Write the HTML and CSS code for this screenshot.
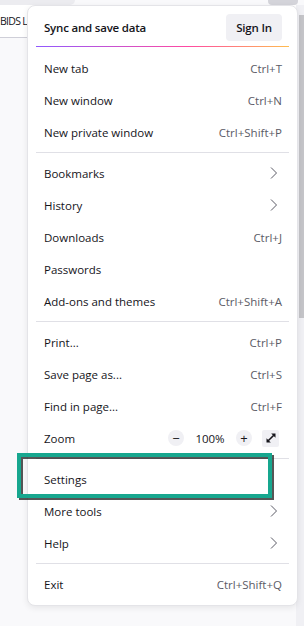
FILE: index.html
```html
<!DOCTYPE html>
<html lang="en">
<head>
  <meta charset="UTF-8" />
  <title>App menu</title>
  <link rel="stylesheet" href="styles.css">
</head>
<body>
  <div class="window">
    <div class="tabs">
      <span class="tab"></span>
      <span class="tab-btn"></span>
    </div>
    <div class="content">
      <div class="page">
        <div class="bookmarks"><span class="bm-label">BIDS L</span></div>
      </div>
      <div class="scrollbar"><div class="thumb"></div></div>
    </div>

    <!-- app menu popup -->
    <div class="menu">
      <div class="menu-header">
        <span>Sync and save data</span>
        <button class="btn-signin">Sign In</button>
      </div>
      <div class="sep-gradient"></div>

      <div class="item"><span>New tab</span><span class="key">Ctrl+T</span></div>
      <div class="item"><span>New window</span><span class="key">Ctrl+N</span></div>
      <div class="item"><span>New private window</span><span class="key">Ctrl+Shift+P</span></div>
      <div class="sep"></div>

      <div class="item"><span>Bookmarks</span><svg class="chev" width="16" height="16" viewBox="0 0 16 16"><path d="M5 2.5L10.5 8L5 13.5"/></svg></div>
      <div class="item"><span>History</span><svg class="chev" width="16" height="16" viewBox="0 0 16 16"><path d="M5 2.5L10.5 8L5 13.5"/></svg></div>
      <div class="item"><span>Downloads</span><span class="key">Ctrl+J</span></div>
      <div class="item"><span>Passwords</span></div>
      <div class="item"><span>Add-ons and themes</span><span class="key">Ctrl+Shift+A</span></div>
      <div class="sep"></div>

      <div class="item"><span>Print...</span><span class="key">Ctrl+P</span></div>
      <div class="item"><span>Save page as...</span><span class="key">Ctrl+S</span></div>
      <div class="item"><span>Find in page...</span><span class="key">Ctrl+F</span></div>
      <div class="item zoom">
        <span>Zoom</span>
        <div class="zoom-controls">
          <span class="round">&minus;</span>
          <span class="zoom-value">100%</span>
          <span class="round">+</span>
          <span class="fullscreen">
            <svg width="12" height="12" viewBox="0 0 12 12">
              <path d="M3.2 8.8L8.8 3.2" stroke="#15141a" stroke-width="1.6"/>
              <path d="M6.2 1.5H10.5V5.8Z" fill="#15141a"/>
              <path d="M1.5 6.2V10.5H5.8Z" fill="#15141a"/>
            </svg>
          </span>
        </div>
      </div>
      <div class="sep"></div>

      <div class="item settings"><span>Settings</span><div class="highlight"></div></div>
      <div class="item"><span>More tools</span><svg class="chev" width="16" height="16" viewBox="0 0 16 16"><path d="M5 2.5L10.5 8L5 13.5"/></svg></div>
      <div class="item"><span>Help</span><svg class="chev" width="16" height="16" viewBox="0 0 16 16"><path d="M5 2.5L10.5 8L5 13.5"/></svg></div>
      <div class="sep"></div>

      <div class="item"><span>Exit</span><span class="key">Ctrl+Shift+Q</span></div>
    </div>
  </div>
</body>
</html>
```

FILE: styles.css
```css
:root {
  --text: #15141a;
  --muted: #5b5b66;
  --line: #e0e0e6;
  --button: #f0f0f4;
  --teal: #17a78f;
}

body {
  margin: 0;
  font-family: 'Open Sans', 'Noto Sans', sans-serif;
  font-size: 11.5px;
  color: var(--text);
  background: #f9f9fb;
}

.window {
  position: relative;
  width: 304px;
  height: 626px;
  overflow: hidden;
}

/* browser chrome behind the menu */
.tabs {
  display: flex;
  justify-content: space-between;
  height: 5px;
}

.tab {
  width: 75px;
  background: #ececf0;
  border-radius: 0 0 6px 0;
}

.tab-btn {
  width: 30px;
  margin-right: 6px;
  background: #d4d4da;
  border-radius: 0 0 4px 4px;
}

.content {
  display: flex;
  height: 621px;
}

.page {
  flex: 1;
}

.bookmarks {
  height: 32px;
  line-height: 32px;
  background: #fff;
  border-bottom: 1px solid #cfcfd8;
}

.bm-label {
  display: block;
  width: 27px;
  white-space: nowrap;
  font-size: 10.5px;
  letter-spacing: -0.7px;
}

.scrollbar {
  width: 8px;
  background: #f0f0f4;
}

.thumb {
  width: 5px;
  height: 303px;
  margin: 10px 0 0 3px;
  background: #c4c4c8;
}

/* app menu */
.menu {
  position: absolute;
  top: 5px;
  left: 27px;
  width: 269px;
  padding: 2px 0 5px;
  background: #fff;
  border: 1px solid #e4e4e8;
  border-radius: 8px;
  box-shadow: 0 2px 6px rgba(0, 0, 0, 0.08);
}

.menu-header {
  display: flex;
  justify-content: space-between;
  align-items: center;
  height: 38px;
  padding: 0 15px 0 16px;
  font-weight: 600;
  letter-spacing: -0.2px;
}

.btn-signin {
  width: 56px;
  height: 27px;
  border: none;
  border-radius: 4px;
  background: var(--button);
  color: var(--text);
  font-family: inherit;
  font-size: 11.5px;
  font-weight: 600;
  letter-spacing: -0.2px;
  padding: 0;
}

.sep-gradient {
  height: 1px;
  margin: 0 8px 5px;
  background: linear-gradient(90deg, #9059ff, #ff4aa2 60%, #ffbd4f);
}

.item {
  position: relative;
  display: flex;
  justify-content: space-between;
  align-items: center;
  height: 32px;
  padding: 0 15px 0 16px;
  white-space: nowrap;
}

.key {
  color: var(--muted);
}

.chev {
  fill: none;
  stroke: var(--muted);
  stroke-width: 1;
}

.sep {
  height: 1px;
  margin: 4px 8px;
  background: var(--line);
}

.zoom-controls {
  display: flex;
  align-items: center;
  margin-right: 3px;
}

.round {
  display: flex;
  justify-content: center;
  align-items: center;
  width: 16px;
  height: 16px;
  border-radius: 50%;
  background: var(--button);
  font-size: 13px;
  line-height: 1;
}

.zoom-value {
  width: 52px;
  text-align: center;
}

.fullscreen {
  display: flex;
  justify-content: center;
  align-items: center;
  width: 17px;
  height: 17px;
  margin-left: 10px;
  border-radius: 2px;
  background: var(--button);
}

/* annotation box drawn over the Settings row */
.highlight {
  position: absolute;
  top: -10px;
  left: -11px;
  width: 255px;
  height: 45px;
  box-sizing: border-box;
  border: 4px solid var(--teal);
  filter: drop-shadow(2px 2px 0.5px rgba(30, 30, 30, 0.75));
}
```
